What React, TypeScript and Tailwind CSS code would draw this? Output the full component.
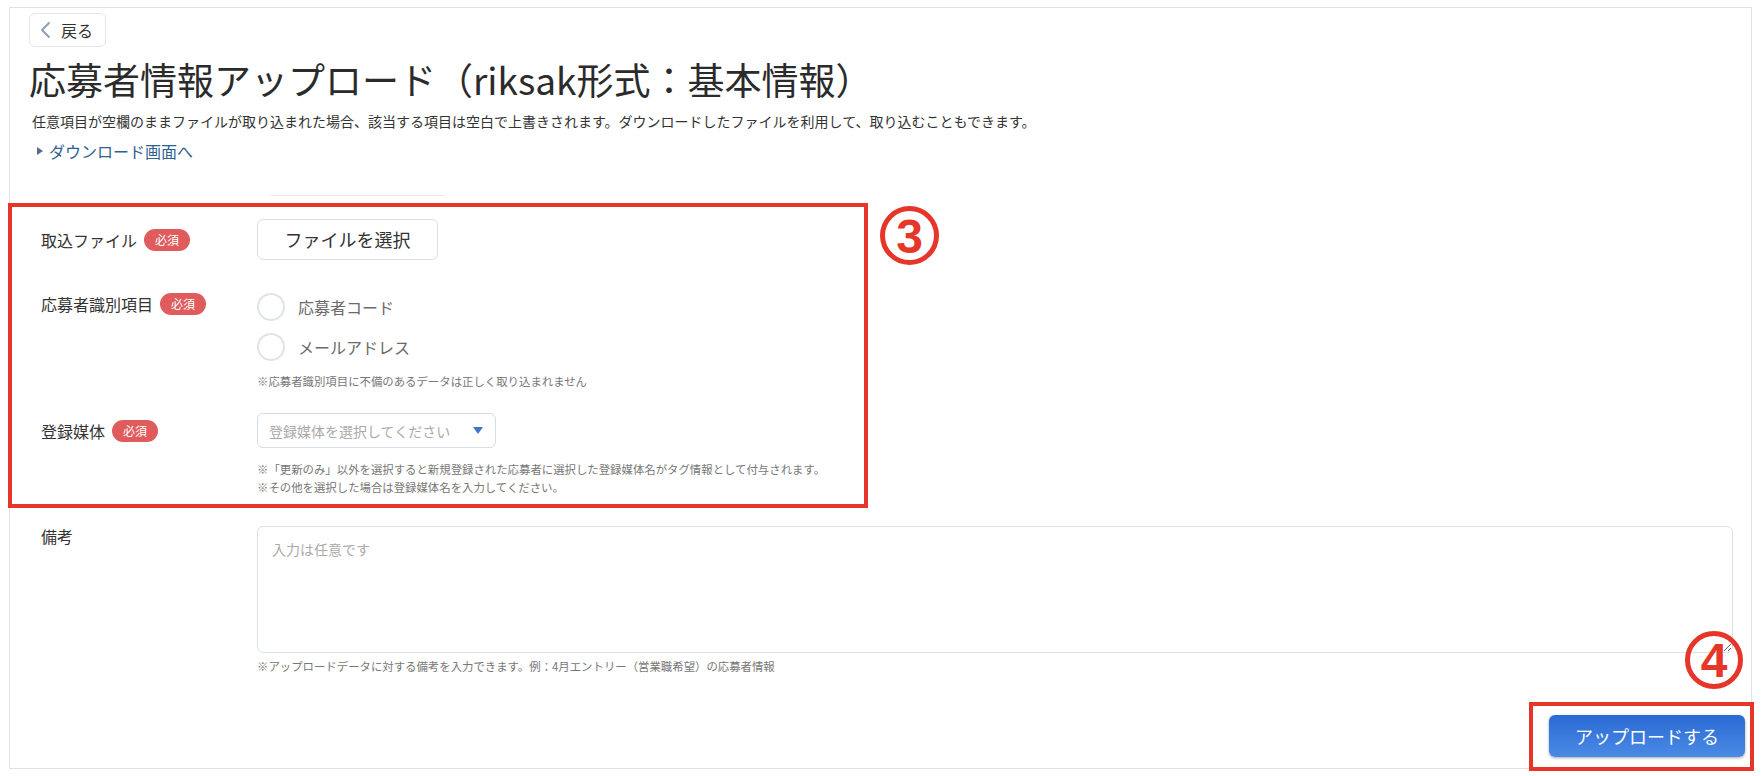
import React from "react";

function RequiredBadge() {
  return (
    <span className="ml-[7px] inline-flex h-[22px] w-[46px] items-center justify-center rounded-full bg-[#e05c5c] text-[12px] leading-none text-white">
      必須
    </span>
  );
}

function Radio({ label }: { label: string }) {
  return (
    <label className="flex h-[28px] items-center">
      <span className="h-[28px] w-[28px] rounded-full border-2 border-[#dfe4ea] bg-white" />
      <span className="ml-[13px] text-[16px] leading-none text-[#6a6a6a]">{label}</span>
    </label>
  );
}

function Marker({ n, className }: { n: string; className: string }) {
  return (
    <div
      className={
        "absolute flex items-center justify-center rounded-full border-[5px] border-[#e6362a] font-['Liberation_Sans',Arial,sans-serif] text-[48px] font-bold leading-none text-[#e6362a] " +
        className
      }
    >
      <span className="mt-[2px]">{n}</span>
    </div>
  );
}

export default function App() {
  return (
    <div className="relative h-[776px] w-full overflow-hidden bg-white pl-[9px] pt-[7px] font-['Noto_Sans_CJK_JP','Noto_Sans',sans-serif] text-[#333]">
      <div className="flex h-[762px] w-[1743px] flex-col border border-[#e2e2e2] pl-[19px]">
        {/* back */}
        <button className="mt-[5px] flex h-[34px] w-[77px] items-center rounded-[6px] border border-[#e3e6ea] bg-white pl-[9px]">
          <svg width="14" height="18" viewBox="0 0 14 18" fill="none">
            <path d="M10 2 L3 9 L10 16" stroke="#8c9db3" strokeWidth="1.8" strokeLinecap="round" strokeLinejoin="round" />
          </svg>
          <span className="ml-[8px] text-[16px] leading-none text-[#333]">戻る</span>
        </button>

        <h1 className="mt-[10px] text-[37px] font-normal leading-[44px] text-[#2b2b2b]">
          応募者情報アップロード（riksak形式：基本情報）
        </h1>

        <p className="ml-[3px] mt-[10px] text-[14px] leading-[20px] text-[#333]">
          任意項目が空欄のままファイルが取り込まれた場合、該当する項目は空白で上書きされます。ダウンロードしたファイルを利用して、取り込むこともできます。
        </p>

        <a className="ml-[8px] mt-[9px] flex h-[22px] items-center text-[16px] leading-[22px] text-[#2e5f8f]">
          <svg width="6" height="8" viewBox="0 0 6 8">
            <path d="M0 0 L6 4 L0 8 Z" fill="#4d6f92" />
          </svg>
          <span className="ml-[6px]">ダウンロード画面へ</span>
        </a>

        <div className="ml-[241px] mt-[33px] h-px w-[175px] bg-[#ececec]" />

        {/* form */}
        <div className="flex flex-col pl-[12px] pr-[18px]">
          {/* file */}
          <div className="mt-[23px] flex items-center">
            <div className="flex w-[216px] items-center">
              <span className="text-[16px] leading-none">取込ファイル</span>
              <RequiredBadge />
            </div>
            <button className="flex h-[41px] w-[181px] items-center justify-center rounded-[6px] border border-[#dadfe6] bg-white text-[18px] text-[#333]">
              ファイルを選択
            </button>
          </div>

          {/* applicant key */}
          <div className="mt-[33px] flex items-start">
            <div className="flex h-[22px] w-[216px] items-center">
              <span className="text-[16px] leading-none">応募者識別項目</span>
              <RequiredBadge />
            </div>
            <div className="flex flex-col">
              <div className="flex flex-col gap-[12px]">
                <Radio label="応募者コード" />
                <Radio label="メールアドレス" />
              </div>
              <p className="mt-[12px] text-[11.4px] leading-[16px] text-[#777]">
                ※応募者識別項目に不備のあるデータは正しく取り込まれません
              </p>
            </div>
          </div>

          {/* media */}
          <div className="mt-[24px] flex items-start">
            <div className="flex h-[35px] w-[216px] items-center">
              <span className="text-[16px] leading-none">登録媒体</span>
              <RequiredBadge />
            </div>
            <div className="flex flex-col">
              <div className="flex h-[35px] w-[239px] items-center justify-between rounded-[6px] border border-[#d6dde5] bg-white pl-[11px] pr-[12px]">
                <span className="text-[14px] leading-none text-[#aaa]">登録媒体を選択してください</span>
                <svg width="10" height="7" viewBox="0 0 10 7">
                  <path d="M0 0 L10 0 L5 7 Z" fill="#4274c8" />
                </svg>
              </div>
              <div className="mt-[12px] text-[11.4px] leading-[18px] text-[#777]">
                <p>※「更新のみ」以外を選択すると新規登録された応募者に選択した登録媒体名がタグ情報として付与されます。</p>
                <p>※その他を選択した場合は登録媒体名を入力してください。</p>
              </div>
            </div>
          </div>

          {/* memo */}
          <div className="mt-[30px] flex items-start">
            <div className="w-[216px] text-[16px] leading-[20px]">備考</div>
            <div className="flex flex-1 flex-col">
              <textarea
                placeholder="入力は任意です"
                className="h-[127px] w-full rounded-[6px] border border-[#dce2e9] bg-white px-[14px] py-[12px] text-[14px] leading-[20px] text-[#333] outline-none placeholder:text-[#aaa]"
              />
              <p className="mt-[5px] text-[11.4px] leading-[16px] text-[#777]">
                ※アップロードデータに対する備考を入力できます。例：4月エントリー（営業職希望）の応募者情報
              </p>
            </div>
          </div>
        </div>

        <div className="mt-[41px] flex justify-end pr-[6px]">
          <button className="flex h-[42px] w-[196px] items-center justify-center rounded-[6px] bg-gradient-to-b from-[#2b6ad3] to-[#4a8ae5] text-[18px] text-white shadow-[0_1px_3px_rgba(0,0,0,0.35)]">
            アップロードする
          </button>
        </div>
      </div>

      {/* annotations */}
      <div className="absolute left-[8px] top-[203px] h-[305px] w-[860px] border-4 border-[#e6362a]" />
      <Marker n="3" className="left-[880px] top-[206px] h-[59px] w-[59px]" />
      <div className="absolute left-[1529px] top-[702px] h-[69px] w-[225px] border-4 border-[#e6362a]" />
      <Marker n="4" className="left-[1685px] top-[631px] h-[58px] w-[58px]" />
    </div>
  );
}
